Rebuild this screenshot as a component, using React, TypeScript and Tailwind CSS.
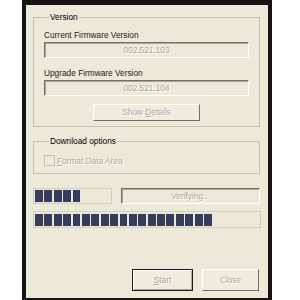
import React from "react";

const dim = "text-[#aca899] [text-shadow:1px_1px_0_#ffffff]";
const sunken =
  "border border-t-[#716f64] border-l-[#716f64] border-b-white border-r-white shadow-[inset_1px_1px_0_#aca899]";

function Blocks({ count }: { count: number }) {
  return (
    <div className="flex h-full gap-[1.5px]">
      {Array.from({ length: count }).map((_, i) => (
        <div key={i} className="h-full w-[7.9px] bg-[#353c5c]" />
      ))}
    </div>
  );
}

function Group({ title, children, className }: { title: string; children: React.ReactNode; className?: string }) {
  return (
    <fieldset className={`border border-[#c4c1b0] px-[10px] ${className ?? ""}`}>
      <legend className="ml-[5px] px-[1px] leading-[10px] text-black">{title}</legend>
      {children}
    </fieldset>
  );
}

export default function App() {
  return (
    <div className="h-[300px] w-[300px] bg-white font-['Liberation_Sans',Arial,sans-serif] text-[8.3px]">
      <div className="ml-[22px] flex h-[300px] w-[250px] flex-col border-t-[5px] border-r-[4px] border-b-[2px] border-l-[4px] border-[#141414] bg-[#ece9d8] pl-[7px] pr-[8px]">
        <Group title="Version" className="mt-[7px] h-[115px]">
          <div className="mt-[8px] leading-[10px] text-[#1a1a1a]">Current Firmware Version</div>
          <div className={`mt-[2px] flex h-[16px] w-[205px] items-center justify-center leading-[10px] ${sunken} ${dim}`}>
            002.521.103
          </div>
          <div className="mt-[10px] leading-[10px] text-[#1a1a1a]">Upgrade Firmware Version</div>
          <div className={`mt-[2px] flex h-[16px] w-[205px] items-center justify-center leading-[10px] ${sunken} ${dim}`}>
            002.521.104
          </div>
          <div className="mt-[8px] flex justify-center">
            <div className={`flex h-[17px] w-[107px] items-center justify-center border border-t-white border-l-white border-b-[#716f64] border-r-[#716f64] bg-[#eeebdf] ${dim}`}>
              <span>
                Show <span className="underline">D</span>etails
              </span>
            </div>
          </div>
        </Group>

        <Group title="Download options" className="mt-[9px] h-[38px]">
          <div className="mt-[9px] flex items-center gap-[2px]">
            <div className="h-[11px] w-[11px] border border-[#c4c1b0] bg-[#ece9d8]" />
            <span className={`${dim} leading-[10px]`}>
              <span className="underline">F</span>ormat Data Area
            </span>
          </div>
        </Group>

        <div className="mt-[14px] flex h-[16px] gap-[9px]">
          <div className="h-full w-[80px] border border-[#cfccbc] px-[1px] py-[1px]">
            <Blocks count={5} />
          </div>
          <div className={`flex h-full w-[140px] items-center justify-center leading-[10px] ${sunken} ${dim}`}>
            Verifying...
          </div>
        </div>

        <div className="mt-[7px] h-[17px] w-[228px] border border-[#cfccbc] px-[1px] pt-[2px] pb-[1px]">
          <Blocks count={19} />
        </div>

        <div className="mt-auto mb-[7px] flex justify-end gap-[9px] pr-[1px]">
          <div className="flex h-[22px] w-[61px] items-center justify-center border border-[#1a1a1a] bg-[#eeebdf] shadow-[inset_1px_1px_0_#ffffff,inset_-1px_-1px_0_#aca899]">
            <span className={dim}>
              <span className="underline">S</span>tart
            </span>
          </div>
          <div className={`flex h-[22px] w-[57px] items-center justify-center border border-t-white border-l-white border-b-[#716f64] border-r-[#716f64] bg-[#eeebdf] ${dim}`}>
            Close
          </div>
        </div>
      </div>
    </div>
  );
}
